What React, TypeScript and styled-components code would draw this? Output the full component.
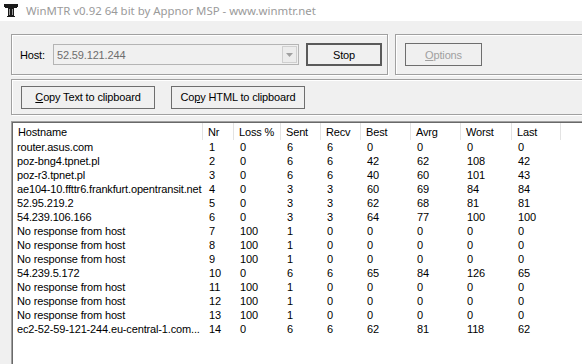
import React from "react";
import styled, { createGlobalStyle } from "styled-components";

const Global = createGlobalStyle`
  html, body { margin: 0; padding: 0; background: #f0f0f0; overflow: hidden; }
  * { box-sizing: border-box; }
`;

const Window = styled.div`
  width: 582px;
  height: 364px;
  overflow: hidden;
  display: flex;
  flex-direction: column;
  background: #f0f0f0;
  font-family: "Liberation Sans", Arial, sans-serif;
  font-size: 11px;
  letter-spacing: -0.15px;
  color: #000;
`;

const TitleBar = styled.div`
  height: 21px;
  flex: none;
  background: #ffffff;
  display: flex;
  align-items: center;
  padding-left: 4px;
  gap: 8px;
`;

const TitleText = styled.span`
  font-family: "Noto Sans", "Liberation Sans", sans-serif;
  font-size: 11.4px;
  letter-spacing: 0;
  color: #9a9a9a;
  white-space: nowrap;
`;

const Body = styled.div`
  flex: 1;
  display: flex;
  flex-direction: column;
  padding-left: 11px;
  min-height: 0;
`;

const TopRow = styled.div`
  display: flex;
  flex: none;
  gap: 7px;
  margin-top: 13px;
  width: 600px;
`;

const Group = styled.div<{ $w?: number }>`
  height: 41px;
  flex: none;
  ${(p) => (p.$w ? `width: ${p.$w}px;` : "flex: 1;")}
  border: 1px solid #a0a0a0;
  box-shadow: inset 1px 1px 0 #fff, 1px 1px 0 #fff;
  display: flex;
  align-items: center;
`;

const HostGroup = styled(Group)`
  padding-left: 8px;
`;

const OptionsGroup = styled(Group)`
  padding-left: 9px;
`;

const CopyGroup = styled(Group)`
  flex: none;
  margin-top: 4px;
  height: 36px;
  width: 600px;
  padding-left: 9px;
  gap: 16px;
`;

const Label = styled.span`
  width: 33px;
`;

const Combo = styled.div`
  width: 246px;
  height: 21px;
  border: 1px solid #b4b4b4;
  background: #f0f0f0;
  display: flex;
  align-items: center;
  padding: 1px;
  padding-left: 3px;
  color: #6d6d6d;
`;

const ComboText = styled.span`
  flex: 1;
`;

const ComboButton = styled.div`
  width: 15px;
  height: 17px;
  border: 1px solid #cfcfcf;
  background: #ececec;
  display: flex;
  align-items: center;
  justify-content: center;
`;

const Button = styled.div<{ $w: number; $default?: boolean; $disabled?: boolean }>`
  width: ${(p) => p.$w}px;
  height: 23px;
  display: flex;
  align-items: center;
  justify-content: center;
  background: #f0f0f0;
  border: ${(p) => (p.$default ? "2px solid #5a5a5a" : "1px solid #6e6e6e")};
  color: ${(p) => (p.$disabled ? "#a0a0a0" : "#000")};
  white-space: nowrap;
`;

const StopButton = styled(Button)`
  margin-left: 7px;
`;

const U = styled.span`
  text-decoration: underline;
`;

const List = styled.div`
  margin-top: 6px;
  width: 600px;
  flex: 1;
  background: #fff;
  border-top: 1px solid #a0a0a0;
  border-left: 1px solid #a0a0a0;
  box-shadow: inset 1px 1px 0 #696969;
  padding: 1px 0 0 1px;
  display: flex;
  flex-direction: column;
`;

const cols = "190px 31px 47px 40px 40px 50px 50px 51px 49px 1fr";

const HeaderRow = styled.div`
  display: grid;
  grid-template-columns: ${cols};
  height: 17px;
  flex: none;
`;

const HeaderCell = styled.div`
  border-right: 1px solid #e3e3e3;
  padding-left: 5px;
  display: flex;
  align-items: center;
  white-space: nowrap;
  overflow: hidden;
`;

const DataRow = styled.div`
  display: grid;
  grid-template-columns: ${cols};
  height: 14px;
  align-items: center;
`;

const DataCell = styled.div<{ $first?: boolean }>`
  padding-left: ${(p) => (p.$first ? 4 : 6)}px;
  white-space: nowrap;
  overflow: hidden;
  line-height: 14px;
`;

const Rows = styled.div`
  padding-top: 0px;
`;

const headers = ["Hostname", "Nr", "Loss %", "Sent", "Recv", "Best", "Avrg", "Worst", "Last", ""];

const data: (string | number)[][] = [
  ["router.asus.com", 1, 0, 6, 6, 0, 0, 0, 0],
  ["poz-bng4.tpnet.pl", 2, 0, 6, 6, 42, 62, 108, 42],
  ["poz-r3.tpnet.pl", 3, 0, 6, 6, 40, 60, 101, 43],
  ["ae104-10.ffttr6.frankfurt.opentransit.net", 4, 0, 3, 3, 60, 69, 84, 84],
  ["52.95.219.2", 5, 0, 3, 3, 62, 68, 81, 81],
  ["54.239.106.166", 6, 0, 3, 3, 64, 77, 100, 100],
  ["No response from host", 7, 100, 1, 0, 0, 0, 0, 0],
  ["No response from host", 8, 100, 1, 0, 0, 0, 0, 0],
  ["No response from host", 9, 100, 1, 0, 0, 0, 0, 0],
  ["54.239.5.172", 10, 0, 6, 6, 65, 84, 126, 65],
  ["No response from host", 11, 100, 1, 0, 0, 0, 0, 0],
  ["No response from host", 12, 100, 1, 0, 0, 0, 0, 0],
  ["No response from host", 13, 100, 1, 0, 0, 0, 0, 0],
  ["ec2-52-59-121-244.eu-central-1.com...", 14, 0, 6, 6, 62, 81, 118, 62],
];

const AppIcon = () => (
  <svg width="14" height="13" viewBox="0 0 14 13">
    <path d="M0 0h14v3h-1v1h-3v8h1v1H3v-1h1V4H1V3H0z" fill="#1a1a1a" />
    <path d="M5 5h1v6H5zM8 5h1v6H8z" fill="#9a9a9a" />
  </svg>
);

const Arrow = () => (
  <svg width="7" height="4" viewBox="0 0 7 4">
    <path d="M0 0h7L3.5 4z" fill="#a0a0a0" />
  </svg>
);

export default function App() {
  return (
    <>
      <Global />
      <Window>
        <TitleBar>
          <AppIcon />
          <TitleText>WinMTR v0.92 64 bit by Appnor MSP - www.winmtr.net</TitleText>
        </TitleBar>
        <Body>
          <TopRow>
            <HostGroup $w={377}>
              <Label>Host:</Label>
              <Combo>
                <ComboText>52.59.121.244</ComboText>
                <ComboButton>
                  <Arrow />
                </ComboButton>
              </Combo>
              <StopButton $w={76} $default>
                Stop
              </StopButton>
            </HostGroup>
            <OptionsGroup>
              <Button $w={77} $disabled>
                <span>
                  <U>O</U>ptions
                </span>
              </Button>
            </OptionsGroup>
          </TopRow>
          <CopyGroup>
            <Button $w={134}>
              <span>
                <U>C</U>opy Text to clipboard
              </span>
            </Button>
            <Button $w={134}>
              <span>
                Co<U>p</U>y HTML to clipboard
              </span>
            </Button>
          </CopyGroup>
          <List>
            <HeaderRow>
              {headers.map((h, i) => (
                <HeaderCell key={i}>{h}</HeaderCell>
              ))}
            </HeaderRow>
            <Rows>
              {data.map((r, i) => (
                <DataRow key={i}>
                  {r.map((c, j) => (
                    <DataCell key={j} $first={j === 0}>
                      {c}
                    </DataCell>
                  ))}
                </DataRow>
              ))}
            </Rows>
          </List>
        </Body>
      </Window>
    </>
  );
}
